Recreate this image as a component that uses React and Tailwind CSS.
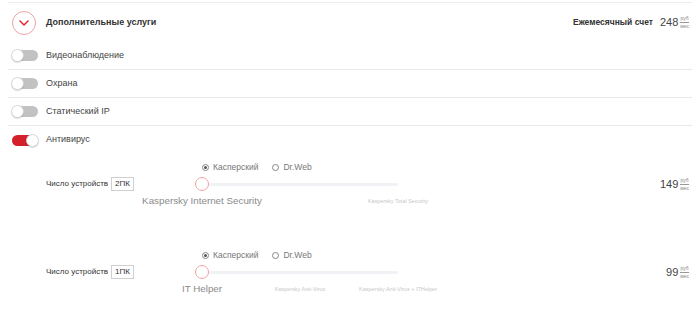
import React from "react";

function Toggle({ on }) {
  return (
    <div className={`relative w-[26px] h-[11px] rounded-full ${on ? "bg-[#d3202a]" : "bg-[#c2c2c2]"}`}>
      <div
        className={`absolute top-[-1px] ${on ? "right-[-1px]" : "left-[-1px]"} w-[13px] h-[13px] rounded-full bg-white border border-[#d6d6d6] shadow-[0_1px_1px_rgba(0,0,0,0.15)]`}
      />
    </div>
  );
}

function Rub() {
  return (
    <span className="inline-flex flex-col items-center leading-none text-[#888] ml-[2px]" style={{ fontSize: 5 }}>
      <span>руб</span>
      <span className="w-full h-px bg-[#999] my-[1px]" />
      <span>мес</span>
    </span>
  );
}

function ToggleRow({ label, on, border = true }) {
  return (
    <div className={`flex items-center h-[28px] ${border ? "border-b border-[#e8e8e8]" : ""}`}>
      <div className="ml-[4px]">
        <Toggle on={on} />
      </div>
      <span className="ml-[8px] text-[9px] text-[#444]">{label}</span>
    </div>
  );
}

function Radio({ checked, label }) {
  return (
    <div className="flex items-center gap-[4px]">
      <span className="w-[7px] h-[7px] rounded-full border border-[#888] flex items-center justify-center">
        {checked && <span className="w-[3px] h-[3px] rounded-full bg-[#555]" />}
      </span>
      <span className="text-[8.5px] text-[#777]">{label}</span>
    </div>
  );
}

function Block({ count, price, labels }) {
  return (
    <div className="flex pt-[8px] pb-[36px]">
      <div className="w-[186px] flex flex-col">
        <div className="h-[10px]" />
        <div className="h-[14px] mt-[5px] flex items-center pl-[38px]">
          <span className="text-[8px] text-[#333]">Число устройств</span>
          <span className="ml-[3px] h-[14px] px-[3px] border border-[#cfcfcf] flex items-center text-[8px] text-[#333]">
            {count}
          </span>
        </div>
      </div>
      <div className="w-[212px] flex flex-col">
        <div className="h-[10px] flex items-center gap-[14px] pl-[8px]">
          <Radio checked label="Касперский" />
          <Radio label="Dr.Web" />
        </div>
        <div className="relative h-[14px] mt-[5px] ml-[8px] w-[196px]">
          <div className="absolute left-0 right-0 top-[6px] h-[3px] bg-[#f0f2f5] rounded-full" />
          <div className="absolute left-[-7px] top-0 w-[14px] h-[14px] rounded-full bg-white border border-[#f2a3a6]" />
        </div>
        <div className="relative h-[10px] mt-[5px] ml-[8px] w-[196px]">
          {labels.map((l, i) => (
            <span
              key={i}
              className={`absolute top-1/2 -translate-x-1/2 -translate-y-1/2 whitespace-nowrap ${l.big ? "text-[9.8px] text-[#8a8a8a]" : "text-[5.5px] text-[#c8c8c8]"}`}
              style={{ left: `${l.pos}%` }}
            >
              {l.text}
            </span>
          ))}
        </div>
      </div>
      <div className="flex-1 flex flex-col">
        <div className="h-[10px]" />
        <div className="h-[14px] mt-[5px] flex items-center justify-end pr-[3px]">
          <span className="text-[11px] text-[#444]">{price}</span>
          <Rub />
        </div>
      </div>
    </div>
  );
}

export default function App() {
  return (
    <div className="w-[700px] h-[328px] bg-white overflow-hidden" style={{ fontFamily: '"Liberation Sans", Arial, sans-serif' }}>
      <div className="mx-[8px] mt-[2px] border-t border-[#ececec]">
        <div className="flex items-center h-[39px]">
          <div className="ml-[4px] w-[24px] h-[24px] rounded-full border border-[#eda3a6] flex items-center justify-center">
            <svg width="10" height="6" viewBox="0 0 10 6">
              <path d="M1 1 L5 5 L9 1" fill="none" stroke="#e3262e" strokeWidth="1.5" strokeLinecap="round" strokeLinejoin="round" />
            </svg>
          </div>
          <span className="ml-[10px] text-[9px] font-bold text-[#333]">Дополнительные услуги</span>
          <div className="ml-auto flex items-center pr-[3px]">
            <span className="text-[8.5px] font-bold text-[#333]">Ежемесячный счет</span>
            <span className="ml-[7px] text-[11px] text-[#444]">248</span>
            <Rub />
          </div>
        </div>
        <div>
          <ToggleRow label="Видеонаблюдение" />
          <ToggleRow label="Охрана" />
          <ToggleRow label="Статический IP" />
          <ToggleRow label="Антивирус" on border={false} />
        </div>
        <Block
          count="2ПК"
          price="149"
          labels={[
            { text: "Kaspersky Internet Security", pos: 0, big: true },
            { text: "Kaspersky Total Security", pos: 100 },
          ]}
        />
        <Block
          count="1ПК"
          price="99"
          labels={[
            { text: "IT Helper", pos: 0, big: true },
            { text: "Kaspersky Anti-Virus", pos: 50 },
            { text: "Kaspersky Anti-Virus + ITHelper", pos: 100 },
          ]}
        />
      </div>
    </div>
  );
}
